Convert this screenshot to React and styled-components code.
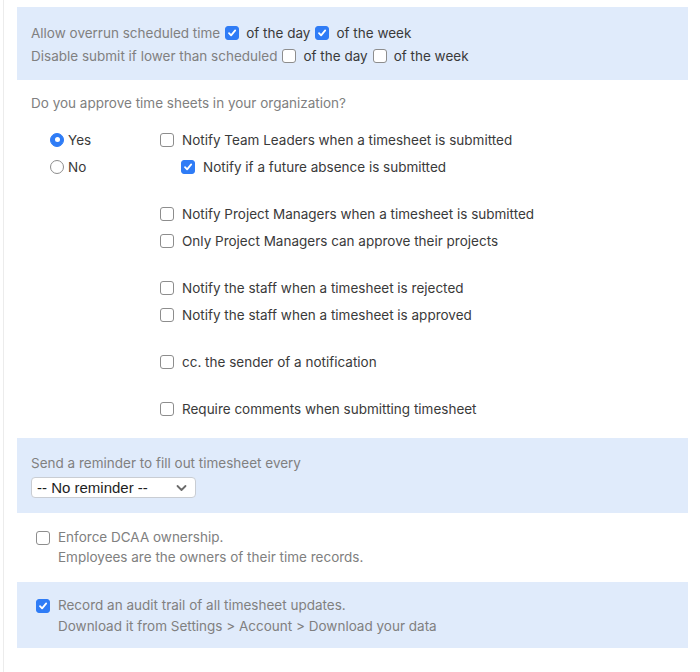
import React from "react";
import styled, { createGlobalStyle } from "styled-components";

const GlobalStyle = createGlobalStyle`
  html, body {
    margin: 0;
    padding: 0;
    background: #ffffff;
  }
  body {
    font-family: Inter, "Liberation Sans", Arial, sans-serif;
    font-size: 13.5px;
    color: #3a3a3a;
  }
`;

const Page = styled.div`
  width: 700px;
  height: 672px;
  box-sizing: border-box;
  padding: 0 12px 0 3px;
`;

const Frame = styled.div`
  border-left: 1px solid #ececec;
  height: 100%;
  padding: 7px 0 0 13px;
  box-sizing: border-box;
`;

const Panel = styled.div`
  background: ${({ tinted }) => (tinted ? "#e0ebfb" : "transparent")};
  padding: ${({ pad }) => pad || "0 14px"};
`;

const Line = styled.div`
  display: flex;
  align-items: center;
  height: ${({ h }) => h || 23}px;
  color: ${({ muted }) => (muted ? "#808080" : "#3a3a3a")};
  white-space: nowrap;
`;

const Muted = styled.span`
  color: #808080;
  margin-right: 5px;
`;

const Option = styled.span`
  margin: 0 5px 0 7px;
  color: #3a3a3a;
`;

const Box = styled.span`
  display: inline-flex;
  align-items: center;
  justify-content: center;
  width: 14px;
  height: 14px;
  box-sizing: border-box;
  border-radius: 3px;
  flex: none;
  background: ${({ checked }) => (checked ? "#2f7cf6" : "#ffffff")};
  border: 1px solid ${({ checked }) => (checked ? "#2f7cf6" : "#8d8d8d")};
`;

const Check = ({ checked }) => (
  <Box checked={checked}>
    {checked && (
      <svg width="10" height="10" viewBox="0 0 10 10">
        <path d="M2 5.2 L4.1 7.4 L8.2 2.4" fill="none" stroke="#fff" strokeWidth="1.8" strokeLinecap="round" strokeLinejoin="round" />
      </svg>
    )}
  </Box>
);

const Circle = styled.span`
  display: inline-flex;
  align-items: center;
  justify-content: center;
  width: 14px;
  height: 14px;
  box-sizing: border-box;
  border-radius: 50%;
  flex: none;
  background: ${({ on }) => (on ? "#2f7cf6" : "#ffffff")};
  border: 1px solid ${({ on }) => (on ? "#2f7cf6" : "#8d8d8d")};
  &::after {
    content: "";
    display: ${({ on }) => (on ? "block" : "none")};
    width: 5px;
    height: 5px;
    border-radius: 50%;
    background: #fff;
  }
`;

const Question = styled.div`
  color: #808080;
  height: 20px;
  line-height: 20px;
  margin: 13px 0 0 14px;
`;

const Approval = styled.div`
  display: grid;
  grid-template-columns: 110px 1fr;
  margin: 13px 0 0 33px;
  padding-bottom: 16px;
`;

const Radios = styled.div`
  display: flex;
  flex-direction: column;
`;

const Choices = styled.div`
  display: flex;
  flex-direction: column;
`;

const Group = styled.div`
  & + & {
    margin-top: 20px;
  }
`;

const Row = styled.label`
  display: flex;
  align-items: center;
  height: 27px;
  padding-left: ${({ indent }) => indent || 0}px;
  color: #3a3a3a;
  white-space: nowrap;
`;

const RowText = styled.span`
  margin-left: ${({ gap }) => gap || 8}px;
`;

const SelectBox = styled.div`
  display: flex;
  align-items: center;
  justify-content: space-between;
  width: 165px;
  height: 21px;
  box-sizing: border-box;
  margin-top: 4px;
  padding: 0 8px 0 5px;
  background: #ffffff;
  border: 1px solid #c9cdd3;
  border-radius: 4px;
  font-family: "Liberation Sans", Arial, sans-serif;
  font-size: 15px;
  color: #1e1e1e;
`;

const Note = styled.div`
  display: flex;
  align-items: flex-start;
  padding: ${({ pad }) => pad};
  background: ${({ tinted }) => (tinted ? "#e0ebfb" : "transparent")};
`;

const NoteBox = styled.div`
  height: 21px;
  display: flex;
  align-items: center;
  margin-right: 8px;
`;

const NoteText = styled.div`
  color: #808080;
  line-height: ${({ lh }) => lh}px;
  white-space: nowrap;
`;

const groups = [
  [
    { text: "Notify Team Leaders when a timesheet is submitted" },
    { text: "Notify if a future absence is submitted", checked: true, indent: 21 },
  ],
  [
    { text: "Notify Project Managers when a timesheet is submitted" },
    { text: "Only Project Managers can approve their projects" },
  ],
  [
    { text: "Notify the staff when a timesheet is rejected" },
    { text: "Notify the staff when a timesheet is approved" },
  ],
  [{ text: "cc. the sender of a notification" }],
  [{ text: "Require comments when submitting timesheet" }],
];

export default function App() {
  return (
    <Page>
      <GlobalStyle />
      <Frame>
        <Panel tinted pad="14px 14px 13px">
          <Line>
            <Muted>Allow overrun scheduled time</Muted>
            <Check checked />
            <Option>of the day</Option>
            <Check checked />
            <Option>of the week</Option>
          </Line>
          <Line>
            <Muted>Disable submit if lower than scheduled</Muted>
            <Check />
            <Option>of the day</Option>
            <Check />
            <Option>of the week</Option>
          </Line>
        </Panel>

        <Question>Do you approve time sheets in your organization?</Question>
        <Approval>
          <Radios>
            <Row>
              <Circle on />
              <RowText gap={4}>Yes</RowText>
            </Row>
            <Row>
              <Circle />
              <RowText gap={4}>No</RowText>
            </Row>
          </Radios>
          <Choices>
            {groups.map((g, i) => (
              <Group key={i}>
                {g.map((item) => (
                  <Row key={item.text} indent={item.indent}>
                    <Check checked={item.checked} />
                    <RowText>{item.text}</RowText>
                  </Row>
                ))}
              </Group>
            ))}
          </Choices>
        </Approval>

        <Panel tinted pad="15px 14px 15px">
          <Line muted h={20}>Send a reminder to fill out timesheet every</Line>
          <SelectBox>
            <span>-- No reminder --</span>
            <svg width="11" height="8" viewBox="0 0 11 8">
              <path d="M1.5 2 L5.5 6 L9.5 2" fill="none" stroke="#6b6b6b" strokeWidth="1.8" strokeLinecap="round" strokeLinejoin="round" />
            </svg>
          </SelectBox>
        </Panel>

        <Note pad="14px 19px 15px">
          <NoteBox><Check /></NoteBox>
          <NoteText lh={20}>
            Enforce DCAA ownership.
            <br />
            Employees are the owners of their time records.
          </NoteText>
        </Note>

        <Note tinted pad="13px 19px 11px">
          <NoteBox><Check checked /></NoteBox>
          <NoteText lh={21}>
            Record an audit trail of all timesheet updates.
            <br />
            Download it from Settings &gt; Account &gt; Download your data
          </NoteText>
        </Note>
      </Frame>
    </Page>
  );
}
